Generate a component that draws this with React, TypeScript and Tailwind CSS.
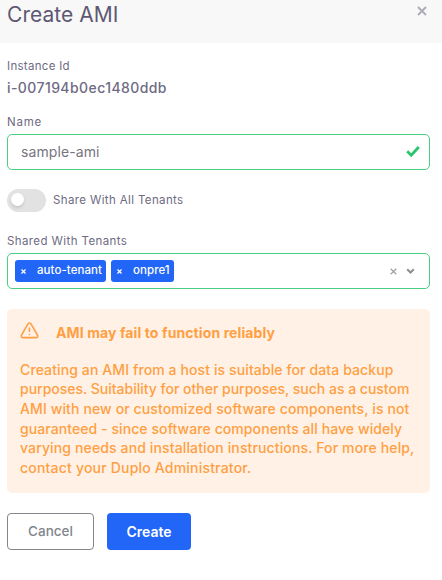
const warningLines = [
  { text: 'Creating an AMI from a host is suitable for data backup', tracking: 'tracking-[0.11px]' },
  { text: 'purposes. Suitability for other purposes, such as a custom', tracking: 'tracking-[-0.01px]' },
  { text: 'AMI with new or customized software components, is not', tracking: 'tracking-[0.12px]' },
  { text: 'guaranteed - since software components all have widely', tracking: 'tracking-[0.08px]' },
  { text: 'varying needs and installation instructions. For more help,', tracking: 'tracking-[0.13px]' },
  { text: 'contact your Duplo Administrator.', tracking: 'tracking-[0.2px]' },
];

function Cross({ className, width = 1.5 }: { className: string; width?: number }) {
  return (
    <svg className={className} viewBox="0 0 10 10" fill="none" stroke="currentColor" strokeWidth={width}>
      <path d="M1 1l8 8M9 1L1 9" />
    </svg>
  );
}

function Chip({ label, className }: { label: string; className: string }) {
  return (
    <span className={`flex h-[22px] items-center rounded-[3px] bg-[#2166f7] pl-[6px] text-[11.5px] font-medium tracking-[0.06px] text-white ${className}`}>
      <Cross className="mt-px mr-[11px] size-[5px] shrink-0" width={2.6} />
      <span className="-mt-px whitespace-nowrap">{label}</span>
    </span>
  );
}

export default function App() {
  return (
    <div className="h-[580px] w-[442px] overflow-hidden bg-white font-['Inter','Liberation_Sans',sans-serif] text-[#6e6b83]">
      <header className="flex h-[43px] items-start justify-between bg-[#f8f8f8] pr-[15px] pl-[7px]">
        <h1 className="text-[21px] leading-[29px] tracking-[0.05px] text-[#5e5873]"><span>Create AMI</span></h1>
        <Cross className="mt-[6px] size-[10px] text-[#aeabb9]" width={1.9} />
      </header>
      <main className="flex flex-col items-start pr-3 pl-[7px]">
        <div className="mt-[15px] h-4 text-[11.5px] leading-4 tracking-[0.3px]"><span>Instance Id</span></div>
        <div className="mt-1 h-5 text-[14px] leading-5 font-medium tracking-[0.42px]"><span>i-007194b0ec1480ddb</span></div>
        <label className="mt-[16px] h-4 text-[11.5px] leading-4 tracking-[0.8px]"><span>Name</span></label>
        <div className="mt-[4px] flex h-[36px] w-full items-center justify-between rounded-[5px] border border-[#49d083] pr-[9px] pl-[13px]">
          <span className="-mt-[2px] text-[14px] tracking-[0.1px] text-[#77747f]">sample-ami</span>
          <svg className="-mt-[2px] size-[14px] text-[#28c76f]" viewBox="0 0 14 14" fill="none" stroke="currentColor" strokeWidth="2.8">
            <path d="M1.2 7.2l4 4L12.8 3" />
          </svg>
        </div>
        <div className="mt-[19px] flex h-[23px] items-center gap-[7px]">
          <span className="flex h-[23px] w-[39px] items-center rounded-full bg-[#e2e2e2] pl-[4px]">
            <span className="mb-[2px] size-[13px] rounded-full bg-white shadow-[0_2px_3px_rgba(0,0,0,0.12)]" />
          </span>
          <span className="mt-px text-[11.5px] tracking-[0.37px]">Share With All Tenants</span>
        </div>
        <label className="mt-[21px] h-4 text-[11.5px] leading-4 tracking-[0.4px]"><span>Shared With Tenants</span></label>
        <div className="mt-[4px] flex h-[36px] w-full items-center rounded-[5px] border border-[#49d083] pr-[14px] pl-[7px]">
          <Chip label="auto-tenant" className="w-[91px]" />
          <Chip label="onpre1" className="ml-[5px] w-[63px]" />
          <Cross className="ml-auto size-[7px] text-[#a2a2a2]" width={1.8} />
          <svg className="ml-[9px] h-[6px] w-[9px] text-[#8e8e8e]" viewBox="0 0 9 6" fill="none" stroke="currentColor" strokeWidth="2">
            <path d="M1.2 1.2l3.3 3.3 3.3-3.3" />
          </svg>
        </div>
        <section className="mt-[20px] h-[184px] w-full rounded-[5px] bg-[#fff1e5] pl-[13px] text-[#ff9f43]">
          <div className="flex h-[50.6px] items-center gap-[17px]">
            <svg className="-mt-[8px] size-[19px]" viewBox="0 0 24 24" fill="none" stroke="currentColor" strokeWidth="2" strokeLinecap="round" strokeLinejoin="round">
              <path d="M10.3 3.4L1.8 18a2 2 0 0 0 1.7 3h17a2 2 0 0 0 1.7-3L13.7 3.4a2 2 0 0 0-3.4 0z" />
              <path d="M12 9v4M12 17h.01" />
            </svg>
            <span className="-mt-[3px] text-[14px] font-bold tracking-[0.1px]">AMI may fail to function reliably</span>
          </div>
          {warningLines.map((line) => (
            <div key={line.text} className={`h-[19.7px] text-[14px] leading-[19.7px] font-medium whitespace-nowrap ${line.tracking}`}>
              <span>{line.text}</span>
            </div>
          ))}
        </section>
        <div className="mt-[20px] flex gap-[13px] text-[14px]">
          <button className="h-[37px] w-[87px] rounded-[4px] border border-[#85868c] text-[13.5px] font-medium text-[#82868b]"><span>Cancel</span></button>
          <button className="h-[37px] w-[84px] rounded-[4px] bg-[#2166f7] font-semibold text-white"><span>Create</span></button>
        </div>
      </main>
    </div>
  );
}
